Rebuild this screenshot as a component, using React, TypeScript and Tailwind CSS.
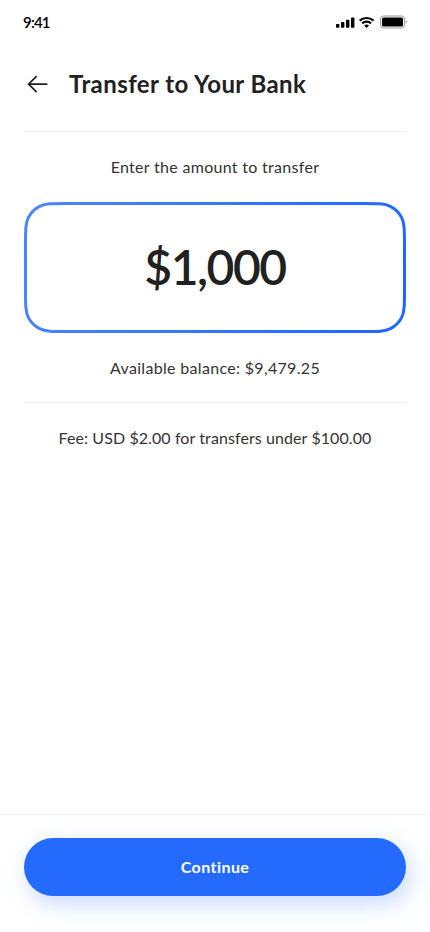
import React from "react"

const StatusBar = () => (
  <div className="flex h-11 items-center justify-between pl-[23px] pr-[23px]">
    <span className="text-[15px] font-semibold leading-5 tracking-[-0.8px] text-black">
      9:41
    </span>
    <div className="flex items-center gap-1 text-black" aria-hidden="true">
      <svg width="19" height="12" viewBox="0 0 19 12" fill="currentColor">
        <rect x="0" y="8" width="3.4" height="3.8" rx="0.8" />
        <rect x="5" y="6" width="3.4" height="5.8" rx="0.8" />
        <rect x="10" y="3.8" width="3.4" height="8" rx="0.8" />
        <rect x="15" y="1.5" width="3.4" height="10.3" rx="0.8" />
      </svg>
      <svg width="16" height="12" viewBox="0 0 16 12" fill="none">
        <path
          d="M.7 4.6a10.4 10.4 0 0 1 13.8 0M3.2 7.4a6.4 6.4 0 0 1 8.8 0"
          stroke="currentColor"
          strokeWidth="2.2"
        />
        <path d="M5.2 9.6a3.5 3.5 0 0 1 4.8 0L7.6 12z" fill="currentColor" />
      </svg>
      <svg width="28" height="14" viewBox="0 0 28 14" fill="none">
        <rect
          x="1.5"
          y="1"
          width="24"
          height="12"
          rx="3"
          stroke="#999"
          strokeWidth="1"
        />
        <rect x="3" y="2.5" width="21" height="9" rx="1.6" fill="currentColor" />
        <path d="M26.7 5.2v3.6c.7-.3 1.1-1 1.1-1.8s-.4-1.5-1.1-1.8z" fill="#999" />
      </svg>
    </div>
  </div>
)

const Header = () => (
  <header className="flex h-20 items-center pl-6">
    <button type="button" aria-label="Back" className="mr-[17px] text-[#212121]">
      <svg width="28" height="28" viewBox="0 0 28 28" fill="none">
        <path
          d="M4.5 14.2h18.2M12.2 6.7l-7.6 7.5 7.6 7.5"
          stroke="currentColor"
          strokeWidth="1.7"
          strokeLinecap="round"
          strokeLinejoin="round"
        />
      </svg>
    </button>
    <h1 className="whitespace-nowrap text-2xl font-bold tracking-[0.42px] text-[#212121]">
      Transfer to Your Bank
    </h1>
  </header>
)

const AmountField = ({ amount }: { amount: string }) => (
  <div className="relative flex h-[131px] items-center justify-center">
    <svg
      className="absolute inset-0"
      width="382"
      height="131"
      viewBox="0 0 382 131"
      fill="none"
      aria-hidden="true"
    >
      <defs>
        <linearGradient id="outline" x1="382" y1="131" x2="0" y2="0" gradientUnits="userSpaceOnUse">
          <stop stopColor="#1a66ff" />
          <stop offset="1" stopColor="#4a86ff" />
        </linearGradient>
      </defs>
      {/* smoothed corners: ease in, short arc, ease out */}
      <path
        d="M43 1.5H339c14.5 0 21.8 0 27.4 2.8a26 26 0 0 1 11.3 11.3c2.8 5.6 2.8 12.9 2.8 27.4V88c0 14.5 0 21.8-2.8 27.4a26 26 0 0 1-11.3 11.3c-5.6 2.8-12.9 2.8-27.4 2.8H43c-14.5 0-21.8 0-27.4-2.8a26 26 0 0 1-11.3-11.3C1.5 109.8 1.5 102.5 1.5 88V43c0-14.5 0-21.8 2.8-27.4A26 26 0 0 1 15.6 4.3C21.2 1.5 28.5 1.5 43 1.5Z"
        stroke="url(#outline)"
        strokeWidth="3"
      />
    </svg>
    <span className="-mt-0.5 text-5xl font-semibold tracking-[-1.5px] text-[#212121]">
      {amount}
    </span>
  </div>
)

const App = () => {
  return (
    <div className="flex h-[932px] w-[430px] flex-col overflow-hidden bg-white font-['Lato',sans-serif]">
      <StatusBar />
      <Header />
      <main className="flex-1 px-6 pt-[7px] text-center text-base leading-[22px] text-[#333]">
        <div className="h-px bg-[#eee]" />
        <p className="mb-6 mt-6 tracking-[0.3px]">Enter the amount to transfer</p>
        <AmountField amount="$1,000" />
        <p className="mb-[23px] mt-6 tracking-[0.32px]">
          Available balance: $9,479.25
        </p>
        <div className="h-px bg-[#eee]" />
        <p className="mt-6 tracking-[0.09px]">
          Fee: USD $2.00 for transfers under $100.00
        </p>
      </main>
      <footer className="h-[118px] border-t border-[#f1f1f1] px-6 pt-[23px]">
        <button
          type="button"
          className="h-[58px] w-full rounded-full bg-[#246bfd] text-base font-bold tracking-[0.45px] text-white shadow-[4px_8px_24px_rgba(36,107,253,0.25)]"
        >
          Continue
        </button>
      </footer>
    </div>
  )
}

export default App
